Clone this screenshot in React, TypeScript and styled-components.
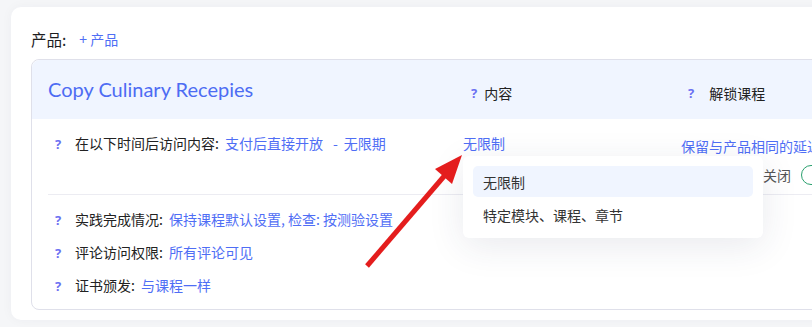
import styled, { createGlobalStyle } from 'styled-components';

const GlobalStyle = createGlobalStyle`
	html, body {
		margin: 0;
		padding: 0;
		background: #f5f6f8;
		overflow: hidden;
	}
	body {
		font-family: 'Noto Sans CJK SC', 'Noto Sans', sans-serif;
		color: #222;
	}
`;

const Page = styled.div`
	position: relative;
	width: 812px;
	height: 327px;
	overflow: hidden;
`;

const OuterCard = styled.div`
	margin: 7px 0 0 11px;
	width: 900px;
	height: 313px;
	box-sizing: border-box;
	padding: 21px 0 0 20px;
	background: #fff;
	border-radius: 10px;
	box-shadow: 0 0 12px rgba(30, 40, 80, 0.04);
`;

const ProductLine = styled.div`
	display: flex;
	align-items: center;
	gap: 13px;
	height: 22px;
	margin-bottom: 9px;
`;

const ProductLabel = styled.span`
	font-size: 15.5px;
	color: #1d1d1f;
`;

const Link = styled.span<{ $size?: number }>`
	color: #4f6ef5;
	font-size: ${({ $size }) => $size || 14}px;
	white-space: nowrap;
`;

const InnerCard = styled.div`
	width: 860px;
	height: 251px;
	box-sizing: border-box;
	border: 1px solid #dfe0ea;
	border-radius: 8px;
	overflow: visible;
`;

const HeaderRow = styled.div`
	display: grid;
	grid-template-columns: 415px 218px 1fr;
	align-items: center;
	height: 59px;
	padding-left: 16px;
	background: #f0f5ff;
	border-radius: 8px 8px 0 0;
`;

const Title = styled.div`
	font-family: Lato, 'Noto Sans', sans-serif;
	font-size: 20px;
	color: #4d6cf3;
	padding-bottom: 1px;
`;

const ColumnHead = styled.div<{ $pad: number; $gap: number }>`
	display: flex;
	align-items: center;
	gap: ${({ $gap }) => $gap}px;
	padding-left: ${({ $pad }) => $pad}px;
	padding-top: 7px;
	font-size: 14px;
	color: #222;
`;

const Hint = styled.span`
	font-family: 'Noto Sans', sans-serif;
	font-weight: 700;
	font-size: 13px;
	color: #6b70f2;
`;

const Body = styled.div`
	padding-left: 16px;
`;

const TopRow = styled.div`
	display: grid;
	grid-template-columns: 415px 218px 1fr;
	padding: 14px 0 9px;
	border-bottom: 1px solid #ececf2;
`;

const Setting = styled.div`
	display: flex;
	align-items: center;
	height: 20px;
	padding-left: 7px;
	font-size: 14px;
	white-space: nowrap;
`;

const HintSlot = styled.span`
	width: 20px;
`;

const Label = styled.span`
	margin-right: 6px;
`;

const Dash = styled.span`
	color: #4f6ef5;
	margin: 0 6px 0 10px;
`;

const ContentCell = styled.div`
	position: relative;
	height: 20px;
	display: flex;
	align-items: center;
`;

const Dropdown = styled.div`
	position: absolute;
	top: 23px;
	left: 0;
	z-index: 2;
	width: 300px;
	box-sizing: border-box;
	padding: 10px 10px 8px;
	display: flex;
	flex-direction: column;
	gap: 2px;
	background: #fff;
	border-radius: 6px;
	box-shadow: 0 8px 36px rgba(40, 50, 90, 0.1);
`;

const Option = styled.div<{ $active?: boolean }>`
	height: 31px;
	display: flex;
	align-items: center;
	padding-left: 10px;
	border-radius: 5px;
	font-size: 14px;
	color: #333;
	background: ${({ $active }) => ($active ? '#f0f5ff' : 'transparent')};
`;

const UnlockCell = styled.div`
	display: flex;
	flex-direction: column;
	gap: 9px;
	padding-top: 3px;
`;

const SwitchLine = styled.div`
	display: flex;
	align-items: center;
	gap: 10px;
	margin-left: 82px;
	font-size: 14px;
	color: #555;
`;

const Toggle = styled.span`
	display: inline-flex;
	align-items: center;
	justify-content: flex-end;
	width: 40px;
	height: 20px;
	padding: 0 3px;
	box-sizing: border-box;
	border: 1.5px solid #2aa06e;
	border-radius: 10px;

	&::before {
		content: '';
		width: 12px;
		height: 12px;
		border-radius: 50%;
		background: #2aa06e;
	}
`;

const SettingsList = styled.div`
	display: flex;
	flex-direction: column;
	gap: 13px;
	padding: 14px 0 15px;
`;

const Arrow = styled.svg`
	position: absolute;
	left: 0;
	top: 0;
	z-index: 3;
	pointer-events: none;
`;

const settings = [
	{ label: '实践完成情况:', value: '保持课程默认设置, 检查: 按测验设置' },
	{ label: '评论访问权限:', value: '所有评论可见' },
	{ label: '证书颁发:', value: '与课程一样' },
];

export default function App() {
	return (
		<Page>
			<GlobalStyle />
			<OuterCard>
				<ProductLine>
					<ProductLabel>产品:</ProductLabel>
					<Link>+ 产品</Link>
				</ProductLine>
				<InnerCard>
					<HeaderRow>
						<Title>Copy Culinary Recepies</Title>
						<ColumnHead $pad={8} $gap={7}>
							<Hint>?</Hint>
							内容
						</ColumnHead>
						<ColumnHead $pad={7} $gap={15}>
							<Hint>?</Hint>
							解锁课程
						</ColumnHead>
					</HeaderRow>
					<Body>
						<TopRow>
							<Setting>
								<HintSlot>
									<Hint>?</Hint>
								</HintSlot>
								<Label>在以下时间后访问内容:</Label>
								<Link>支付后直接开放</Link>
								<Dash>-</Dash>
								<Link>无限期</Link>
							</Setting>
							<ContentCell>
								<Link>无限制</Link>
								<Dropdown>
									<Option $active>无限制</Option>
									<Option>特定模块、课程、章节</Option>
								</Dropdown>
							</ContentCell>
							<UnlockCell>
								<Link>保留与产品相同的延迟</Link>
								<SwitchLine>
									关闭
									<Toggle />
								</SwitchLine>
							</UnlockCell>
						</TopRow>
						<SettingsList>
							{settings.map((s) => (
								<Setting key={s.label}>
									<HintSlot>
										<Hint>?</Hint>
									</HintSlot>
									<Label>{s.label}</Label>
									<Link>{s.value}</Link>
								</Setting>
							))}
						</SettingsList>
					</Body>
				</InnerCard>
			</OuterCard>
			<Arrow width="812" height="327" viewBox="0 0 812 327">
				<line x1="367" y1="266" x2="446" y2="174" stroke="#e41d1d" strokeWidth="5" />
				<polygon points="462,155 452,184 435,169" fill="#e41d1d" />
			</Arrow>
		</Page>
	);
}
